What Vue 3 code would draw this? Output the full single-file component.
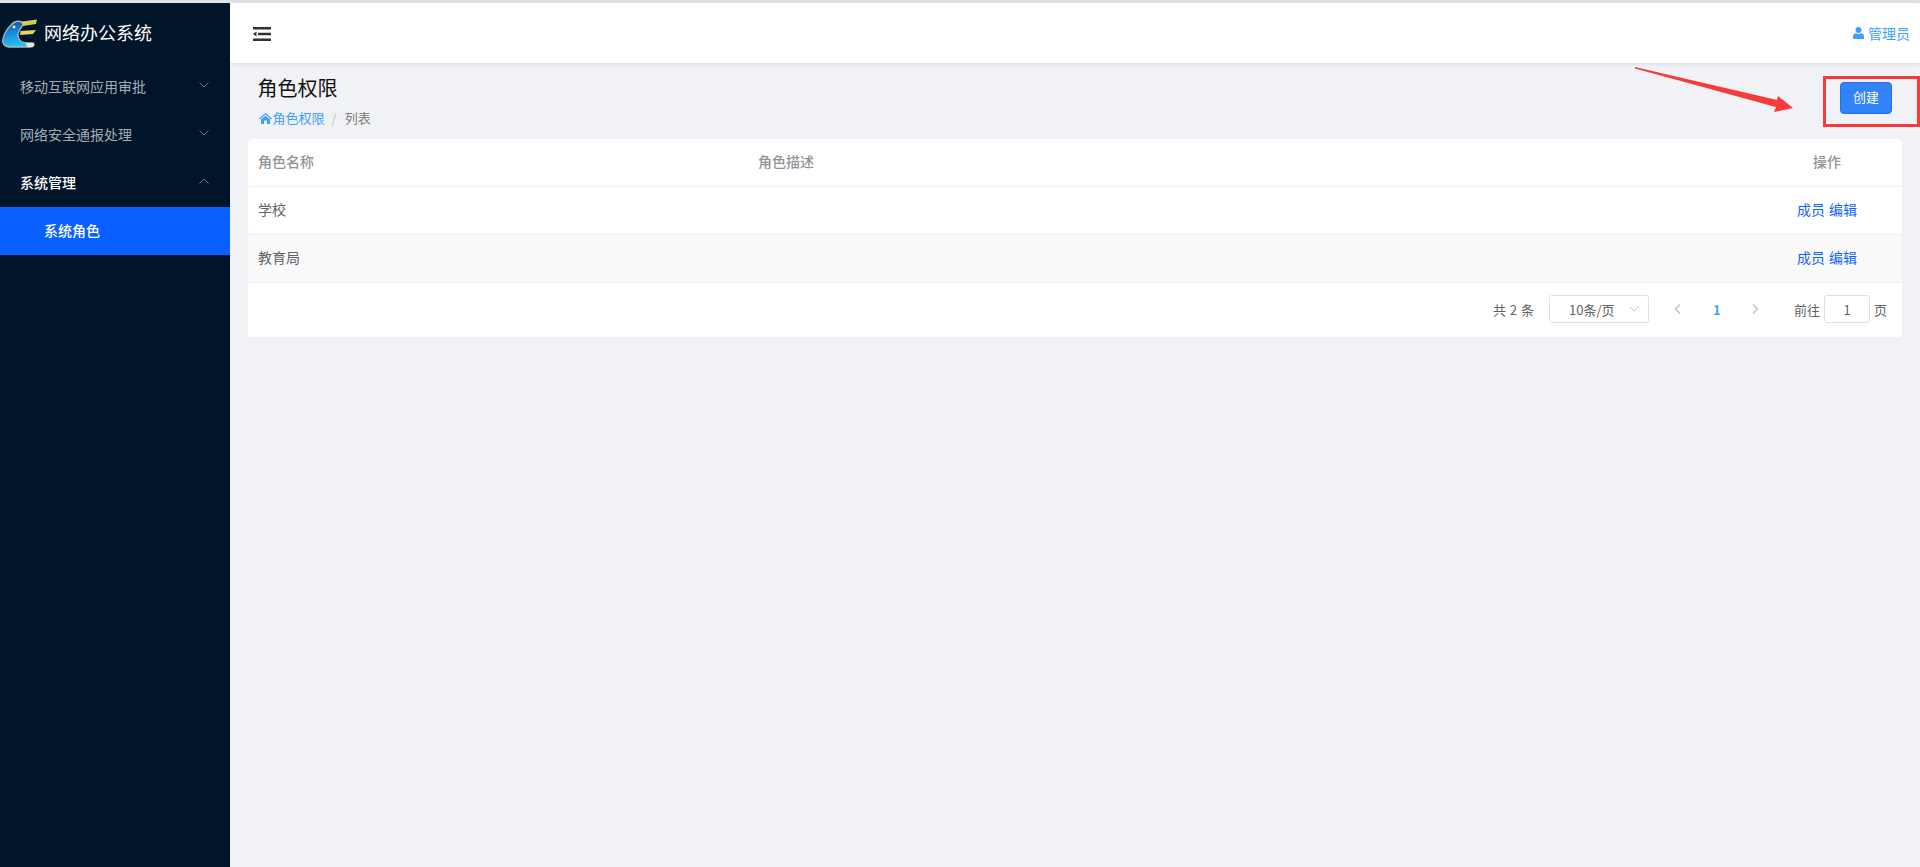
<script setup>
const menus = [
  { label: '移动互联网应用审批', open: false },
  { label: '网络安全通报处理', open: false },
  { label: '系统管理', open: true }
]
const rows = [
  { name: '学校', striped: false },
  { name: '教育局', striped: true }
]
</script>

<template>
  <div class="page">
    <div class="topline"></div>
    <div class="shell">
      <aside class="sidebar">
        <div class="brand">
          <svg class="logo" width="36" height="30" viewBox="0 0 36 30">
            <defs>
              <linearGradient id="lg" x1="0" y1="0" x2="0.2" y2="1">
                <stop offset="0" stop-color="#1d4f8c" />
                <stop offset="0.45" stop-color="#1483d6" />
                <stop offset="1" stop-color="#27c3f2" />
              </linearGradient>
            </defs>
            <path d="M9 6C13 1 21 1 21 6c-2 3-5 6-5 10 0 5 4 8 10 8h5c2 2 1 4-3 4H8c-6 0-8-4-7-8 1-5 4-10 8-14z" fill="url(#lg)" stroke="#a9b6c0" stroke-width="1.300" />
            <path d="M20 2.500 35 .5l-1 4.500-13 2z" fill="#d9c94e" />
            <path d="M18.500 12 34 11l-3 4-13 1z" fill="#e2d460" />
            <path d="M24 24h8l-1 4h-6z" fill="#e8e8d8" />
            <circle cx="12" cy="8" r="1.400" fill="#e8f4ff" />
          </svg>
          <span class="brand-text">网络办公系统</span>
        </div>
        <nav>
          <div v-for="m in menus" :key="m.label" class="menu-item" :class="{ open: m.open }">
            <span>{{ m.label }}</span>
            <svg class="chev" width="10" height="6" viewBox="0 0 10 6">
              <path :d="m.open ? 'M.5 5.500 5 1l4.500 4.500' : 'M.5.500 5 5 9.500.500'" fill="none" stroke="#6b7785" stroke-width="1" />
            </svg>
          </div>
          <div class="sub-item">系统角色</div>
        </nav>
      </aside>

      <main class="main">
        <header class="header">
          <svg class="fold" width="18" height="14" viewBox="0 0 18 14">
            <path d="M0 0h18v2.500H0zM5 5.750h13v2.500H5zM0 11.500h18V14H0zM0 7l3.500-2.500v5z" fill="#303133" />
          </svg>
          <div class="user">
            <svg width="11" height="12" viewBox="0 0 11 12">
              <circle cx="5.500" cy="3" r="3" fill="#409eff" />
              <path d="M0 12V9.500C0 7.500 1.500 6.500 3 6.300c1.500 1 3.500 1 5 0 1.500.2 3 1.200 3 3.200V12z" fill="#409eff" />
            </svg>
            <span>管理员</span>
          </div>
        </header>

        <section class="page-head">
          <div class="titles">
            <h1>角色权限</h1>
            <div class="crumbs">
              <svg width="13" height="11" viewBox="0 0 13 11">
                <path d="M6.500 0 13 5.600l-.8.8-5.700-4.900L.8 6.400 0 5.600zM2 6.500l4.500-3.800L11 6.500V11H8V7.500H5V11H2z" fill="#409eff" />
              </svg>
              <span class="crumb-link">角色权限</span>
              <span class="sep">/</span>
              <span class="crumb-cur">列表</span>
            </div>
          </div>
          <button class="create">创建</button>
        </section>

        <section class="card">
          <div class="row head">
            <div class="c-name">角色名称</div>
            <div class="c-desc">角色描述</div>
            <div class="c-act">操作</div>
          </div>
          <div v-for="r in rows" :key="r.name" class="row" :class="{ striped: r.striped }">
            <div class="c-name">{{ r.name }}</div>
            <div class="c-desc"></div>
            <div class="c-act links"><a>成员</a><a>编辑</a></div>
          </div>
          <div class="pager">
            <span class="total">共 2 条</span>
            <div class="size">
              <span>10条/页</span>
              <svg width="10" height="6" viewBox="0 0 10 6"><path d="M.5.500 5 5 9.500.500" fill="none" stroke="#c0c4cc" /></svg>
            </div>
            <svg class="nav" width="7" height="10" viewBox="0 0 7 10"><path d="M6 .5 1.500 5 6 9.500" fill="none" stroke="#c0c4cc" stroke-width="1.500" /></svg>
            <span class="cur">1</span>
            <svg class="nav next" width="7" height="10" viewBox="0 0 7 10"><path d="M1 .5 5.500 5 1 9.500" fill="none" stroke="#c0c4cc" stroke-width="1.500" /></svg>
            <span class="goto">前往</span>
            <div class="jump">1</div>
            <span>页</span>
          </div>
        </section>
      </main>
    </div>

    <!-- annotations drawn over the screenshot -->
    <svg class="arrow" width="170" height="50" viewBox="0 0 170 50">
      <path d="M0 0 L142 33 L143 29 L158 41 L139 45 L141 40 L0 1.500 Z" fill="#f83a3a" />
    </svg>
    <div class="redbox"></div>
  </div>
</template>

<style>
html, body { margin: 0; padding: 0; background: #fff; }
</style>

<style scoped>
.page {
  position: relative;
  height: 867px;
  overflow: hidden;
  display: flex;
  flex-direction: column;
  font-family: "Noto Sans CJK SC", "Liberation Sans", sans-serif;
  font-size: 14px;
}
.topline { height: 3px; background: #e2e2e4; flex: none; }
.shell { flex: 1; display: flex; min-height: 0; }
.sidebar { width: 230px; flex: none; background: #001529; color: #fff; }
.brand { height: 60px; display: flex; align-items: center; padding-left: 2px; }
.logo { flex: none; margin-top: 2px; }
.brand-text { font-size: 18px; margin-left: 6px; margin-top: -2px; color: #fff; line-height: 1; }
.menu-item {
  height: 48px;
  box-sizing: border-box;
  padding: 0 21px 2px 20px;
  display: flex;
  align-items: center;
  justify-content: space-between;
  color: #a6adb4;
  line-height: 1;
}
.menu-item.open { color: #fff; font-weight: 500; }
.chev { margin-top: -2px; }
.sub-item {
  height: 48px;
  box-sizing: border-box;
  padding: 0 0 2px 44px;
  display: flex;
  align-items: center;
  background: #0960ff;
  color: #fff;
  font-weight: 500;
}
.main { flex: 1; min-width: 0; background: #f0f2f5; display: flex; flex-direction: column; }
.header {
  height: 60px;
  flex: none;
  background: #fff;
  box-shadow: 0 1px 4px rgba(0, 21, 41, 0.1);
  display: flex;
  align-items: center;
  justify-content: space-between;
  padding: 0 10px 0 23px;
}
.fold { margin-top: 1px; }
.user { display: flex; align-items: center; gap: 4px; color: #409eff; }
.page-head {
  height: 76px;
  flex: none;
  display: flex;
  justify-content: space-between;
  align-items: flex-start;
  padding: 0 28px 0 27.500px;
}
.titles { padding-top: 10px; }
h1 { margin: 0; font-size: 20px; font-weight: 400; color: #111; line-height: 30px; }
.crumbs { display: flex; align-items: center; font-size: 13px; line-height: 20px; margin-top: 5px; color: #8a8a8a; padding-left: 1px; }
.crumb-link { color: #409eff; margin-left: 1px; }
.sep { margin: 0 8px 0 7px; color: #c0c4cc; }
.crumb-cur { color: #7d7d7d; }
.create {
  width: 52px;
  height: 32px;
  margin-top: 19px;
  padding: 0 0 3px;
  border: 1px solid #1f70ee;
  border-radius: 4px;
  background: #3282f8;
  color: #fff;
  font: inherit;
  font-size: 13px;
}
.card {
  margin: 0 18px;
  background: #fff;
  border-radius: 4px;
  color: #606266;
}
.row {
  height: 48px;
  box-sizing: border-box;
  padding-bottom: 3px;
  display: flex;
  align-items: center;
  border-bottom: 1px solid #ebeef5;
}
.striped { background: #fafafa; }
.head { color: #909399; font-weight: 500; }
.c-name { width: 510px; padding-left: 10px; box-sizing: border-box; flex: none; }
.c-desc { flex: 1; }
.c-act { width: 150px; flex: none; text-align: center; }
.links { display: flex; justify-content: center; gap: 4px; color: #0f62fe; }
.pager {
  height: 54px;
  box-sizing: border-box;
  padding: 0 15px 2px 0;
  display: flex;
  align-items: center;
  justify-content: flex-end;
  font-size: 13px;
  color: #606266;
}
.total { word-spacing: 1px; }
.size {
  width: 100px;
  height: 28px;
  box-sizing: border-box;
  margin-left: 15px;
  padding: 0 9px 0 19px;
  border: 1px solid #dcdfe6;
  border-radius: 3px;
  display: flex;
  align-items: center;
  justify-content: space-between;
}
.nav { margin-left: 25px; }
.cur { margin-left: 32px; width: 8px; color: #409eff; font-weight: 700; }
.next { margin-left: 31px; }
.goto { margin-left: 35px; }
.jump {
  width: 46px;
  height: 28px;
  box-sizing: border-box;
  margin: 0 4px;
  border: 1px solid #dcdfe6;
  border-radius: 3px;
  display: flex;
  align-items: center;
  justify-content: center;
}
.arrow { position: absolute; left: 1635px; top: 67px; }
.redbox {
  position: absolute;
  left: 1823px;
  top: 76px;
  width: 97px;
  height: 51px;
  box-sizing: border-box;
  border: 3px solid #f83a3a;
}
</style>
